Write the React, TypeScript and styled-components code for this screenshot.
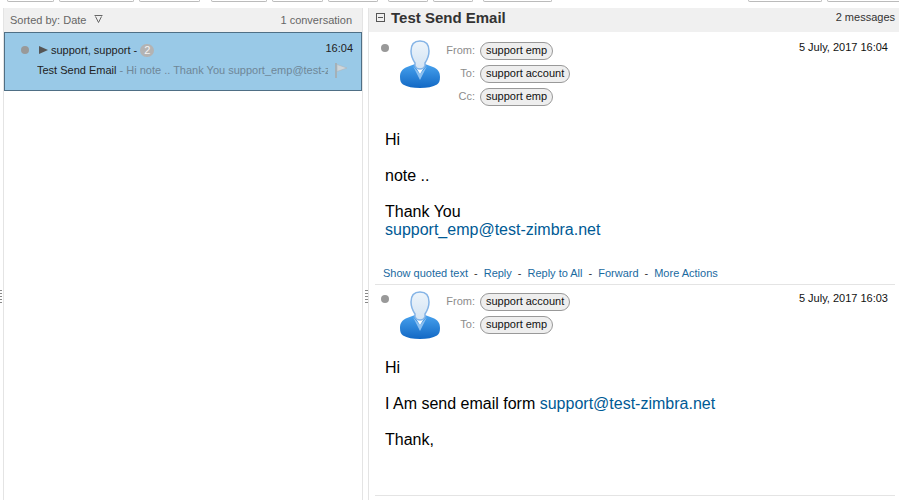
import React from "react";
import styled, { createGlobalStyle } from "styled-components";

const Global = createGlobalStyle`
  html, body { margin: 0; padding: 0; background: #fff; }
  body { font-family: "Liberation Sans", Arial, sans-serif; overflow: hidden; }
`;

const Page = styled.div`
  width: 899px;
  height: 500px;
  display: flex;
  flex-direction: column;
  overflow: hidden;
  color: #333;
`;

const Toolbar = styled.div`
  height: 8px;
  flex: none;
  display: flex;
  justify-content: space-between;
  overflow: hidden;
`;

const ToolGroup = styled.div`
  display: flex;
  gap: 5px;
  padding-left: 7px;
`;

const ToolRight = styled.div`
  display: flex;
  gap: 5px;
  margin-right: -4px;
`;

const ToolButton = styled.div<{ $w: number; $gapAfter?: number }>`
  width: ${(p) => p.$w}px;
  height: 2px;
  box-sizing: border-box;
  border: 1px solid #bbb;
  border-top: 0;
  border-radius: 0 0 4px 4px;
  margin-right: ${(p) => p.$gapAfter ?? 0}px;
`;

const Columns = styled.div`
  flex: 1;
  display: flex;
  min-height: 0;
`;

const ListPane = styled.div`
  width: 360px;
  flex: none;
  margin-left: 3px;
  border-right: 1px solid #e4e4e4;
  border-left: 1px solid #e4e4e4;
  box-sizing: border-box;
  position: relative;
`;

const ListHead = styled.div`
  height: 24px;
  background: #f0f0f0;
  display: flex;
  align-items: center;
  justify-content: space-between;
  padding: 0 10px 0 6px;
  font-size: 11px;
  color: #666;
`;

const Sort = styled.span`
  display: flex;
  align-items: center;
  gap: 8px;
`;

const SortIcon = styled.svg`
  margin-top: -2px;
`;

const Row = styled.div`
  height: 59px;
  box-sizing: border-box;
  background: #99c9e7;
  border: 1px solid #4f6f85;
  font-size: 11px;
`;

const RowTop = styled.div`
  display: flex;
  align-items: center;
  height: 14px;
  margin-top: 10px;
  padding-left: 16px;
  color: #222;
`;

const Dot = styled.span`
  width: 8px;
  height: 8px;
  border-radius: 50%;
  background: #999;
  flex: none;
`;

const Arrow = styled.span`
  width: 0;
  height: 0;
  margin: 0 3px 0 10px;
  border-left: 9px solid #555;
  border-top: 4.5px solid transparent;
  border-bottom: 4.5px solid transparent;
`;

const Badge = styled.span`
  width: 14px;
  height: 13px;
  margin-left: 3px;
  border-radius: 7px;
  background: #b3b3b3;
  color: #f4f4f4;
  font-size: 11px;
  line-height: 13px;
  text-align: center;
`;

const RowTime = styled.span`
  margin-left: auto;
  margin-right: 8px;
  margin-top: -4px;
  font-size: 11px;
  color: #222;
`;

const RowBottom = styled.div`
  display: flex;
  align-items: center;
  height: 14px;
  margin-top: 6px;
  padding-left: 32px;
  color: #222;
`;

const Snippet = styled.span`
  width: 291px;
  overflow: hidden;
  white-space: nowrap;
`;

const Excerpt = styled.span`
  color: #6f8797;
`;

const FlagIcon = styled.svg`
  margin-left: 7px;
  flex: none;
`;

const Gutter = styled.div`
  width: 5px;
  flex: none;
  display: flex;
  justify-content: flex-end;
  padding-top: 282px;
  box-sizing: border-box;
`;

const Grip = styled.div`
  width: 3px;
  height: 13px;
  background: repeating-linear-gradient(#888 0 1px, transparent 1px 3px);
`;

const LeftGrip = styled(Grip)`
  position: absolute;
  left: -4px;
  top: 282px;
  width: 2px;
`;

const ReadPane = styled.div`
  flex: 1;
  min-width: 0;
  border-left: 1px solid #e4e4e4;
`;

const SubjectBar = styled.div`
  height: 24px;
  box-sizing: border-box;
  background: #f0f0f0;
  display: flex;
  align-items: center;
  padding: 0 4px 6px 7px;
`;

const Collapse = styled.span`
  width: 7px;
  height: 7px;
  border: 1px solid #555;
  position: relative;
  flex: none;
  margin-right: 6px;
  &::after {
    content: "";
    position: absolute;
    left: 1px;
    right: 1px;
    top: 3px;
    height: 1px;
    background: #555;
  }
`;

const Subject = styled.span`
  font-size: 15px;
  font-weight: bold;
  color: #333;
`;

const Count = styled.span`
  margin-left: auto;
  font-size: 11px;
  color: #333;
`;

const Message = styled.div<{ $h: number }>`
  height: ${(p) => p.$h}px;
  box-sizing: border-box;
  margin: 0 4px 0 6px;
  border-bottom: 1px solid #e4e4e4;
  position: relative;
  display: flex;
  flex-direction: column;
`;

const Header = styled.div<{ $top: number }>`
  display: flex;
  padding: ${(p) => p.$top}px 7px 0 0;
`;

const StatusDot = styled(Dot)`
  margin: 4px 0 0 6px;
`;

const Avatar = styled.svg`
  flex: none;
  margin-left: 11px;
`;

const Addresses = styled.div`
  display: flex;
  flex-direction: column;
  gap: 3px;
  margin: 1px 0 0 6px;
`;

const AddrRow = styled.div`
  display: flex;
  align-items: center;
  height: 20px;
`;

const AddrLabel = styled.span`
  width: 29px;
  text-align: right;
  margin: 0 5px 2px 0;
  font-size: 11px;
  color: #8c8c8c;
`;

const Chip = styled.span`
  height: 18px;
  box-sizing: border-box;
  padding: 0 5px;
  border: 1px solid #999;
  border-radius: 9px;
  background: #eee;
  color: #111;
  font-size: 11px;
  line-height: 15px;
`;

const DateText = styled.span`
  margin: 1px 0 0 auto;
  font-size: 11px;
  color: #111;
`;

const Body = styled.div<{ $top: number }>`
  margin-top: ${(p) => p.$top}px;
  padding-left: 10px;
  font-size: 16px;
  line-height: 18px;
  color: #000;
`;

const Para = styled.p`
  margin: 0 0 18px;
`;

const MailLink = styled.span`
  color: #005a95;
`;

const Actions = styled.div`
  position: absolute;
  left: 8px;
  bottom: 5px;
  display: flex;
  gap: 6px;
  font-size: 11px;
  color: #333;
`;

const ActionLink = styled.span`
  color: #1a6a9f;
`;

const Person = ({ id }: { id: string }) => (
  <Avatar width="40" height="48" viewBox="0 0 40 48">
    <defs>
      <linearGradient id={`face${id}`} x1="0" y1="0" x2="0" y2="1">
        <stop offset="0" stopColor="#eef5fb" />
        <stop offset="1" stopColor="#d2e3f3" />
      </linearGradient>
      <linearGradient id={`suit${id}`} x1="0" y1="0" x2="0" y2="1">
        <stop offset="0" stopColor="#48a2ee" />
        <stop offset="1" stopColor="#1268c4" />
      </linearGradient>
    </defs>
    <path d="M0 37c0-5 2-8 7-10l8-3 5 5 5-5 8 3c5 2 7 5 7 10 0 4-1 6-3 7.500-4 2.500-10 3.500-17 3.500s-13-1-17-3.500C1 43 0 41 0 37z" fill={`url(#suit${id})`} />
    <path d="M13 26l7 14 7-14-7 8z" fill="#8cc0f0" />
    <path d="M15 26l5 8 5-8-5 2z" fill="#fff" />
    <path d="M20 1c-6 0-9 4-9 10 0 5 2 9 4 12v3c1 2 3 3 5 3s4-1 5-3v-3c2-3 4-7 4-12 0-6-3-10-9-10z" fill={`url(#face${id})`} stroke="#85b4e6" strokeWidth="1.500" />
  </Avatar>
);

const App = () => (
  <Page>
    <Global />
    <Toolbar>
      <ToolGroup>
        <ToolButton $w={47} />
        <ToolButton $w={75} />
        <ToolButton $w={61} $gapAfter={6} />
        <ToolButton $w={56} />
        <ToolButton $w={51} />
        <ToolButton $w={50} $gapAfter={5} />
        <ToolButton $w={40} />
        <ToolButton $w={40} $gapAfter={5} />
        <ToolButton $w={69} />
      </ToolGroup>
      <ToolRight>
        <ToolButton $w={74} />
        <ToolButton $w={76} />
      </ToolRight>
    </Toolbar>
    <Columns>
      <ListPane>
        <ListHead>
          <Sort>
            Sorted by: Date
            <SortIcon width="9" height="8" viewBox="0 0 9 8">
              <path d="M0.500 0.500H8.500M1.500 1.500L4.500 7.500L7.500 1.500" fill="none" stroke="#666" strokeWidth="1" />
            </SortIcon>
          </Sort>
          <span>1 conversation</span>
        </ListHead>
        <Row>
          <RowTop>
            <Dot />
            <Arrow />
            support, support -
            <Badge>2</Badge>
            <RowTime>16:04</RowTime>
          </RowTop>
          <RowBottom>
            <Snippet>
              Test Send Email <Excerpt>- Hi note .. Thank You support_emp@test-zimbra.net</Excerpt>
            </Snippet>
            <FlagIcon width="13" height="15" viewBox="0 0 13 15">
              <path d="M1 0V15" stroke="#a8a8a8" strokeWidth="1.500" />
              <path d="M2 1.500L12 5L2 8.500z" fill="#cfd6da" stroke="#adb6bc" strokeWidth="0.600" />
            </FlagIcon>
          </RowBottom>
        </Row>
        <LeftGrip />
      </ListPane>
      <Gutter>
        <Grip />
      </Gutter>
      <ReadPane>
        <SubjectBar>
          <Collapse />
          <Subject>Test Send Email</Subject>
          <Count>2 messages</Count>
        </SubjectBar>
        <Message $h={253}>
          <Header $top={8}>
            <StatusDot />
            <Person id="a" />
            <Addresses>
              <AddrRow><AddrLabel>From:</AddrLabel><Chip>support emp</Chip></AddrRow>
              <AddrRow><AddrLabel>To:</AddrLabel><Chip>support account</Chip></AddrRow>
              <AddrRow><AddrLabel>Cc:</AddrLabel><Chip>support emp</Chip></AddrRow>
            </Addresses>
            <DateText>5 July, 2017 16:04</DateText>
          </Header>
          <Body $top={24}>
            <Para>Hi</Para>
            <Para>note ..</Para>
            <Para>Thank You<br /><MailLink>support_emp@test-zimbra.net</MailLink></Para>
          </Body>
          <Actions>
            <ActionLink>Show quoted text</ActionLink> -
            <ActionLink>Reply</ActionLink> -
            <ActionLink>Reply to All</ActionLink> -
            <ActionLink>Forward</ActionLink> -
            <ActionLink>More Actions</ActionLink>
          </Actions>
        </Message>
        <Message $h={211}>
          <Header $top={6}>
            <StatusDot />
            <Person id="b" />
            <Addresses>
              <AddrRow><AddrLabel>From:</AddrLabel><Chip>support account</Chip></AddrRow>
              <AddrRow><AddrLabel>To:</AddrLabel><Chip>support emp</Chip></AddrRow>
            </Addresses>
            <DateText>5 July, 2017 16:03</DateText>
          </Header>
          <Body $top={20}>
            <Para>Hi</Para>
            <Para>I Am send email form <MailLink>support@test-zimbra.net</MailLink></Para>
            <Para>Thank,</Para>
          </Body>
        </Message>
      </ReadPane>
    </Columns>
  </Page>
);

export default App;
